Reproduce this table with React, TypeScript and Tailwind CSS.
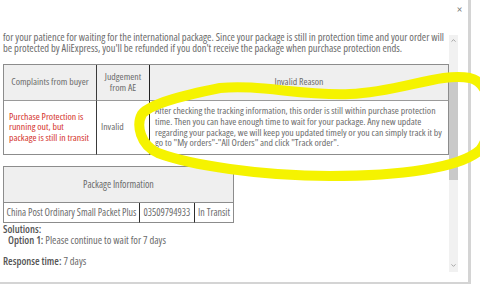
import { ChevronDown, ChevronUp } from "lucide-react"

const reasonLines = [
  "After checking the tracking information, this order is still within purchase protection",
  "time. Then you can have enough time to wait for your package. Any new update",
  "regarding your package, we will keep you updated timely or you can simply track it by",
  'go to "My orders"-"All Orders" and click "Track order".',
]

function Highlight() {
  return (
    <svg className="absolute inset-0 pointer-events-none" width="480" height="284" viewBox="0 0 480 284">
      <path
        d="M 142 114 C 150 104, 180 96, 220 88 C 260 84, 300 96, 350 94 C 400 92, 440 72, 470 78 C 495 84, 495 130, 480 150 C 460 168, 400 176, 330 176 C 260 176, 190 165, 158 153 C 140 145, 136 125, 142 114"
        fill="none"
        stroke="#f5f300"
        strokeWidth="10"
        strokeLinecap="round"
        strokeLinejoin="round"
      />
    </svg>
  )
}

export default function App() {
  return (
    <div className="relative w-[480px] h-[284px] overflow-hidden bg-white font-['Open_Sans',sans-serif] text-[10.5px] [font-stretch:75%] text-[#6b6b6b]">
      <div className="flex flex-col w-[471px] h-[284px] bg-white border-r-[3px] border-b-2 border-[#d4d4d4]">

        {/* header with close */}
        <div className="h-[32px] flex justify-end pr-[6px]">
          <span className="mt-[4px] text-[12px] leading-none text-[#777]">×</span>
        </div>

        <div className="flex h-[240px]">
          {/* scrolled content */}
          <div className="w-[449px] overflow-hidden">
            <div className="pl-[3px] leading-[11px]">
              <p className="whitespace-nowrap">
                for your patience for waiting for the international package. Since your package is still in protection time and your order will
                <br />
                be protected by AliExpress, you'll be refunded if you don't receive the package when purchase protection ends.
              </p>

              <table className="mt-[10px] w-[446px] table-fixed border-separate border-spacing-0 border-t border-l border-[#8c8c8c] text-[9.8px] leading-[10.6px]">
                <colgroup>
                  <col className="w-[93px]" />
                  <col className="w-[53px]" />
                  <col />
                </colgroup>
                <thead>
                  <tr className="h-[36px] bg-[#efefef]">
                    <th className="font-normal text-center border-r border-b border-r-[#3a3a3a] border-b-[#9a9a9a]">Complaints from buyer</th>
                    <th className="font-normal text-center border-r border-b border-r-[#222] border-b-[#9a9a9a]">Judgement<br />from AE</th>
                    <th className="font-normal text-center border-r border-b border-r-[#8c8c8c] border-b-[#9a9a9a]">Invalid Reason</th>
                  </tr>
                </thead>
                <tbody>
                  <tr className="h-[54px]">
                    <td className="px-[5px] text-[#d4322c] whitespace-nowrap border-r border-b border-r-[#3a3a3a] border-b-[#8c8c8c]">
                      Purchase Protection is<br />running out, but<br />package is still in transit
                    </td>
                    <td className="px-[4px] border-r border-b border-r-[#222] border-b-[#8c8c8c]">Invalid</td>
                    <td className="px-[5px] whitespace-nowrap border-r border-b border-[#8c8c8c]">
                      {reasonLines.map((l) => <div key={l}>{l}</div>)}
                    </td>
                  </tr>
                </tbody>
              </table>

              <table className="mt-[11px] w-[231px] table-fixed border-separate border-spacing-0 border-t border-l border-[#8c8c8c] whitespace-nowrap text-[10px]">
                <colgroup>
                  <col className="w-[136px]" />
                  <col className="w-[55px]" />
                  <col />
                </colgroup>
                <thead>
                  <tr className="h-[36px] bg-[#efefef]">
                    <th colSpan={3} className="font-normal text-center border-r border-b border-[#8c8c8c]">Package Information</th>
                  </tr>
                </thead>
                <tbody>
                  <tr className="h-[20px]">
                    <td className="text-center border-r border-b border-r-[#2e2e2e] border-b-[#8c8c8c]">China Post Ordinary Small Packet Plus</td>
                    <td className="text-center border-r border-b border-r-[#2e2e2e] border-b-[#8c8c8c]">03509794933</td>
                    <td className="text-center border-r border-b border-[#8c8c8c]">In Transit</td>
                  </tr>
                </tbody>
              </table>

              <p className="mt-[1px] font-semibold text-[#555]">Solutions:</p>
              <p className="pl-[5px]">
                <span className="font-semibold text-[#555]">Option 1:</span> Please continue to wait for 7 days
              </p>
              <p className="mt-[10px]">
                <span className="font-semibold text-[#555]">Response time:</span> 7 days
              </p>
            </div>
          </div>

          {/* scrollbar */}
          <div className="mt-[3px] w-[9px] h-[237px] bg-[#f1f1f1] flex flex-col items-center">
            <ChevronUp className="mt-[2px] w-[7px] h-[7px] text-[#888]" strokeWidth={2.5} />
            <div className="mt-[34px] w-full h-[102px] bg-[#c9c9c9]" />
            <div className="flex-1" />
            <ChevronDown className="mb-[3px] w-[7px] h-[7px] text-[#888]" strokeWidth={2.5} />
          </div>
        </div>
      </div>
      <Highlight />
    </div>
  )
}
